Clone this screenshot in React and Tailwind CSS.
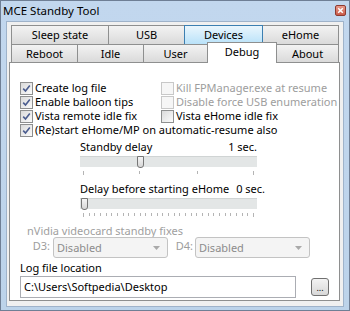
import React from "react";

const font = { fontFamily: '"Noto Sans", "Open Sans", sans-serif' };

const Check = ({ checked, disabled, label }) => (
  <div className="flex items-center h-[14px] whitespace-nowrap">
    <span
      className={`w-[13px] h-[13px] border flex items-center justify-center mr-[2px] shrink-0 ${
        disabled
          ? "border-[#c8c8c8] bg-[#f6f6f6]"
          : "border-[#8e8f8f] bg-gradient-to-br from-[#dadada] to-[#fbfbfb]"
      }`}
    >
      {checked && (
        <svg width="9" height="9" viewBox="0 0 9 9">
          <path d="M1.2 4.6 L3.5 7 L7.8 1.6" stroke="#4b5d8f" strokeWidth="1.6" fill="none" />
        </svg>
      )}
    </span>
    <span className={disabled ? "text-[#9d9d9d]" : "text-black"}>{label}</span>
  </div>
);

const Tab = ({ label, w, hot }) => (
  <div
    className={`h-full flex items-center justify-center border border-b-0 -ml-px first:ml-0 ${
      hot
        ? "bg-gradient-to-b from-[#eaf6fd] to-[#b9e2f9] border-[#3c7fb1] relative z-10"
        : "bg-gradient-to-b from-[#f3f3f3] to-[#dadada] border-[#8e8f8f]"
    }`}
    style={{ width: w }}
  >
    {label}
  </div>
);

const Slider = ({ pos, ticks, big }) => (
  <div className="w-[177px]">
    <div className="relative h-[11px] bg-[#e3e6e6] border-t border-[#d0d4d4]">
      <div
        className="absolute top-[-1px] w-[7px] h-[12px] border border-[#767676] rounded-b-[3px] bg-gradient-to-b from-[#f5f5f5] to-[#d6d6d6]"
        style={{ left: pos }}
      />
    </div>
    <div className="relative h-[4px] mt-[4px]">
      {ticks.map((t, i) => (
        <div
          key={i}
          className="absolute top-0 w-px bg-[#b4b4b4]"
          style={{ left: t, height: big.includes(i) ? 4 : 3 }}
        />
      ))}
    </div>
  </div>
);

const Combo = () => (
  <div className="w-[115px] h-[21px] border border-[#c3c3c3] rounded-[3px] bg-[#f4f4f4] flex items-center justify-between pl-[3px] pr-[7px] text-[#8c8c8c] shrink-0">
    <span>Disabled</span>
    <svg width="7" height="4" viewBox="0 0 7 4">
      <path d="M0 0 L7 0 L3.5 4 Z" fill="#a9a9a9" />
    </svg>
  </div>
);

export default function App() {
  const manyTicks = Array.from({ length: 31 }, (_, i) => 3 + Math.round(i * 5.67));
  return (
    <div
      className="w-[350px] h-[311px] bg-gradient-to-b from-[#c2d7ee] to-[#bcd3ea] border border-[#6f7f95] flex flex-col text-[11px] leading-[14px] overflow-hidden text-black"
      style={font}
    >
      <div className="h-[20px] shrink-0 flex items-center justify-between pl-[2px] pr-[3px]">
        <span className="text-[11.5px]">MCE Standby Tool</span>
        <div className="w-[11px] h-[11px] bg-gradient-to-b from-[#e89a8c] to-[#c95a48] border border-[#8e3a2f] rounded-[2px] flex items-center justify-center mb-[2px]">
          <svg width="7" height="7" viewBox="0 0 7 7">
            <path d="M1.2 1.2 L5.8 5.8 M5.8 1.2 L1.2 5.8" stroke="#fff" strokeWidth="1.5" />
          </svg>
        </div>
      </div>
      <div className="flex-1 mx-[5px] mb-[3px] bg-[#f0f0f0] border border-[#9fb3ca] pt-[3px] pl-[2px] pr-[3px] flex flex-col">
        <div className="pl-[2px]">
          <div className="flex h-[19px]">
            <Tab label="Sleep state" w={98} />
            <Tab label="USB" w={77} />
            <Tab label="Devices" w={79} hot />
            <Tab label="eHome" w={77} />
          </div>
          <div className="flex items-end h-[18px]">
            <Tab label="Reboot" w={67} />
            <Tab label="Idle" w={67} />
            <Tab label="User" w={65} />
            <div className="w-[70px] h-[21px] -ml-px -mb-px bg-white border border-b-0 border-[#8e8f8f] flex items-start justify-center pt-[2px] relative z-10">
              Debug
            </div>
            <Tab label="About" w={63} />
          </div>
        </div>
        <div className="w-[331px] h-[239px] bg-white border border-[#8e8f8f] pl-[10px] pt-[18px]">
          <div className="flex">
            <div className="w-[141px] flex flex-col">
              <Check checked label="Create log file" />
              <Check checked label="Enable balloon tips" />
              <Check checked label="Vista remote idle fix" />
            </div>
            <div className="flex flex-col">
              <Check disabled label="Kill FPManager.exe at resume" />
              <Check disabled label="Disable force USB enumeration" />
              <Check label="Vista eHome idle fix" />
            </div>
          </div>
          <Check checked label="(Re)start eHome/MP on automatic-resume also" />
          <div className="ml-[60px] mt-[3px] w-[177px]">
            <div className="flex justify-between h-[14px]">
              <span>Standby delay</span>
              <span>1 sec.</span>
            </div>
            <div className="mt-[2px]">
              <Slider pos={57} ticks={[3, 59, 117, 173]} big={[0, 3]} />
            </div>
            <div className="flex gap-[7px] h-[14px] mt-[7px] whitespace-nowrap">
              <span>Delay before starting eHome</span>
              <span>0 sec.</span>
            </div>
            <div className="mt-[2px]">
              <Slider pos={1} ticks={manyTicks} big={[0, 30]} />
            </div>
          </div>
          <div className="ml-[7px] mt-[7px] h-[13px] text-[#a0a0a0] whitespace-nowrap">nVidia videocard standby fixes</div>
          <div className="flex items-start text-[#9d9d9d]">
            <span className="w-[33px] text-right pr-[3px] pt-[2px]">D3:</span>
            <Combo />
            <span className="w-[27px] text-right pr-[2px] pt-[2px]">D4:</span>
            <Combo />
          </div>
          <div className="mt-[3px] h-[14px]">Log file location</div>
          <div className="flex items-center mt-[1px]">
            <div className="w-[276px] h-[22px] border border-[#abadb3] bg-white flex items-center pl-[3px]">
              C:\Users\Softpedia\Desktop
            </div>
            <div className="ml-[15px] w-[18px] h-[18px] border border-[#707070] rounded-[3px] bg-gradient-to-b from-[#f3f3f3] to-[#d8d8d8] flex items-end justify-center pb-[3px] text-[9px] leading-[9px]">
              ...
            </div>
          </div>
        </div>
      </div>
    </div>
  );
}
